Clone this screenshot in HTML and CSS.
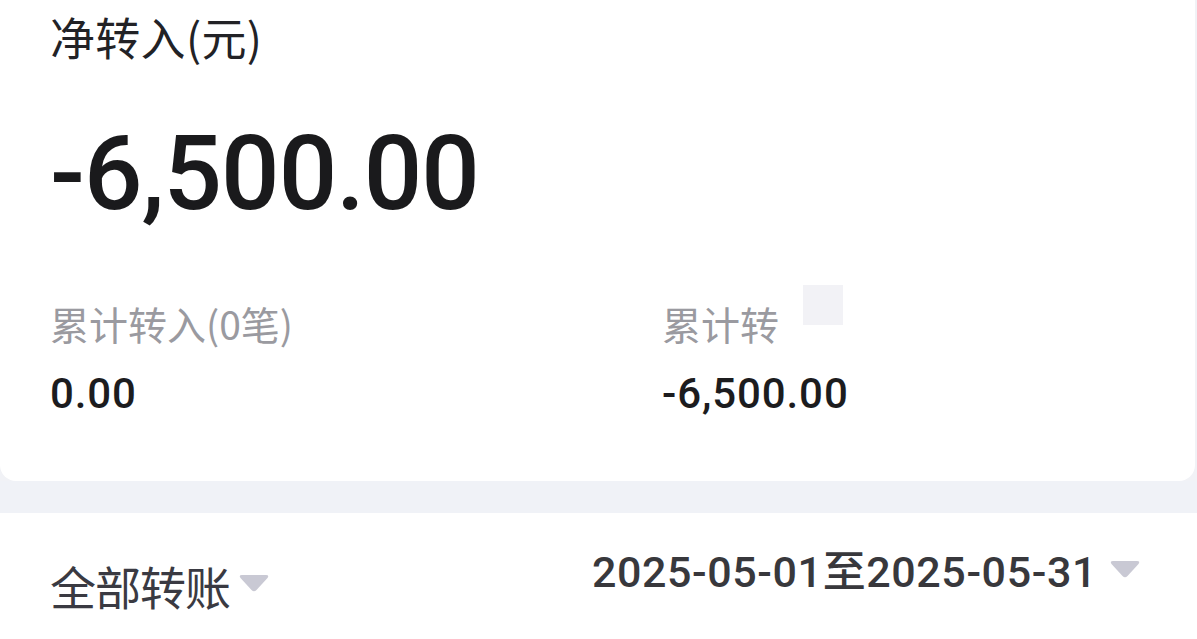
FILE: index.html
```html
<!DOCTYPE html>
<html lang="zh-CN">
<head>
<meta charset="utf-8">
<title>净转入</title>
<link rel="stylesheet" href="styles.css">
</head>
<body>
<div class="page">
  <section class="card">
    <div class="title">净转入(元)</div>
    <div class="amount">-6,500.00</div>
    <div class="stats">
      <div class="stat">
        <div class="stat-label"><span>累计转入(0笔)</span></div>
        <div class="stat-value">0.00</div>
      </div>
      <div class="stat">
        <div class="stat-label"><span>累计转</span><i class="mask"></i></div>
        <div class="stat-value">-6,500.00</div>
      </div>
    </div>
  </section>
  <div class="band"></div>
  <section class="filters">
    <div class="filter filter-type">
      <span class="filter-text">全部转账</span>
      <svg class="caret" width="32" height="20" viewBox="0 0 32 20"><path d="M4 2 H28 Q31.5 2 29.5 5 L18.5 17 Q16 19.6 13.5 17 L2.5 5 Q0.5 2 4 2 Z" fill="#c9c9d4"/></svg>
    </div>
    <div class="filter filter-date">
      <span class="date-text">2025-05-01至2025-05-31</span>
      <svg class="caret caret-date" width="32" height="20" viewBox="0 0 32 20"><path d="M4 2 H28 Q31.5 2 29.5 5 L18.5 17 Q16 19.6 13.5 17 L2.5 5 Q0.5 2 4 2 Z" fill="#c9c9d4"/></svg>
    </div>
  </section>
</div>
</body>
</html>
```

FILE: styles.css
```css
* {
  box-sizing: border-box;
}
html, body {
  margin: 0;
  padding: 0;
}
body {
  background: #f1f2f6;
  width: 1197px;
  height: 639px;
  overflow: hidden;
  font-family: "Noto Sans CJK SC", sans-serif;
}
.page {
  display: flex;
  flex-direction: column;
  height: 639px;
}
.card {
  background: #ffffff;
  width: 1195px;
  height: 481px;
  flex: none;
  padding: 13px 0 0 50px;
  border-radius: 0 0 16px 16px;
  display: flex;
  flex-direction: column;
}
.title {
  font-size: 45px;
  line-height: 48px;
  letter-spacing: 0.3px;
  color: #222226;
}
.amount {
  margin-top: 61px;
  font-family: Roboto, sans-serif;
  font-weight: 500;
  font-size: 103px;
  line-height: 103px;
  color: #1a1a1c;
  letter-spacing: -1px;
}
.stats {
  margin-top: 78px;
  display: grid;
  grid-template-columns: 612px 1fr;
}
.stat {
  display: flex;
  flex-direction: column;
}
.stat-label {
  display: flex;
  align-items: flex-start;
  font-size: 39px;
  line-height: 40px;
  color: #9a9aa0;
}
.mask {
  display: block;
  width: 40px;
  height: 40px;
  margin: -18px 0 0 24px;
  background: #f2f2f6;
}
.stat-value {
  margin-top: 29px;
  font-family: Roboto, sans-serif;
  font-weight: 500;
  font-size: 42px;
  line-height: 43px;
  letter-spacing: 0.9px;
  color: #1c1c1e;
}
.band {
  height: 32px;
  flex: none;
  background: #f0f2f7;
}
.filters {
  background: #ffffff;
  flex: 1;
  display: flex;
  justify-content: space-between;
  align-items: flex-start;
  padding: 38px 56px 0 50px;
}
.filter {
  display: flex;
  align-items: flex-start;
}
.filter-type {
  margin-top: 11px;
}
.filter-text {
  font-size: 46px;
  line-height: 46px;
  letter-spacing: -1px;
  color: #3a3a42;
}
.caret {
  display: block;
  margin: 11px 0 0 8px;
}
.date-text {
  font-family: Roboto, "Noto Sans CJK SC", sans-serif;
  font-weight: 500;
  font-size: 43px;
  line-height: 43px;
  letter-spacing: 0.6px;
  color: #38383c;
}
.caret-date {
  margin: 8px 0 0 12px;
}
```
